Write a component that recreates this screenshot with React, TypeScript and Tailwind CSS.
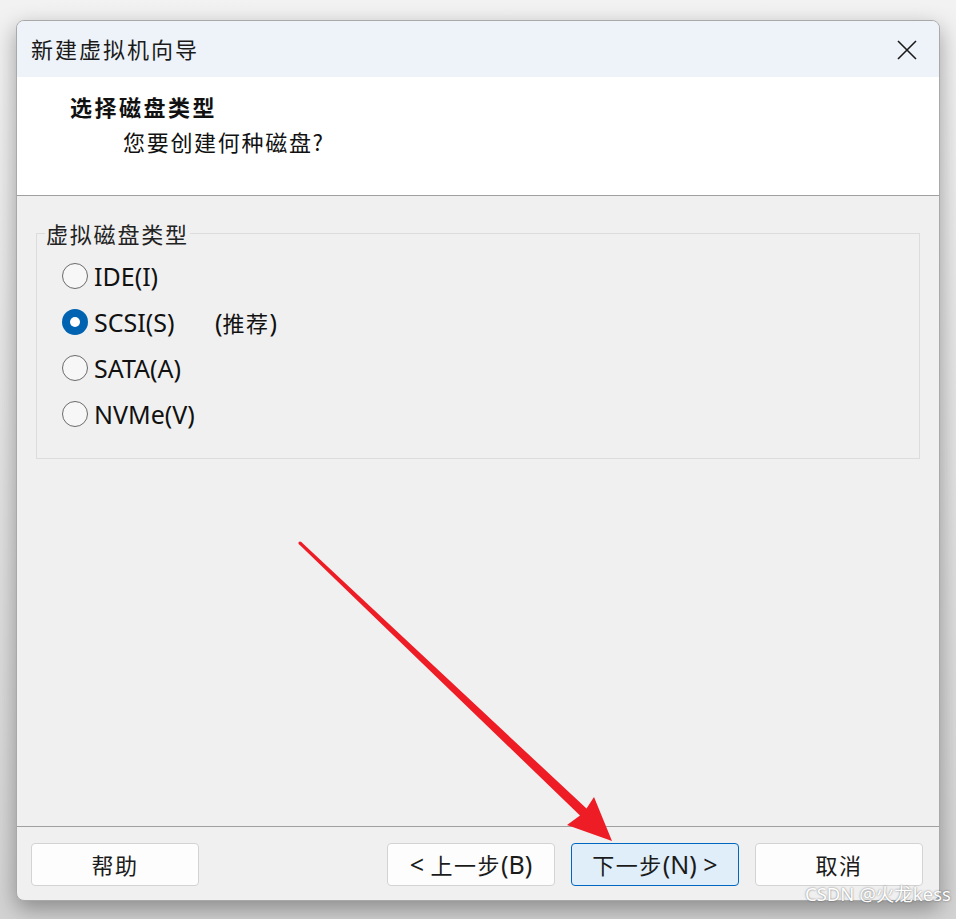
import React, { useState } from 'react';

const FONT = "font-['Noto_Sans','Noto_Sans_CJK_SC',sans-serif]";

const diskTypes = [
  { id: 'ide', label: 'IDE(I)' },
  { id: 'scsi', label: 'SCSI(S)', note: '(推荐)' },
  { id: 'sata', label: 'SATA(A)' },
  { id: 'nvme', label: 'NVMe(V)' },
];

// Windows draws latin runs in Segoe UI, which sits larger than the CJK face
const Mixed: React.FC<{ text: string }> = ({ text }) => (
  <>
    {text.split(/([\x20-\x7e]+)/).map((part, i) =>
      /^[\x20-\x7e]+$/.test(part) ? (
        <span key={i} className="text-[25px] whitespace-pre">
          {part}
        </span>
      ) : (
        <span key={i} className="text-[22px] tracking-[1.5px]">
          {part}
        </span>
      )
    )}
  </>
);

const Radio: React.FC<{ checked: boolean }> = ({ checked }) =>
  checked ? (
    <span className="w-[26px] h-[26px] rounded-full bg-[#0063b1] flex items-center justify-center shrink-0">
      <span className="w-[10px] h-[10px] rounded-full bg-white" />
    </span>
  ) : (
    <span className="w-[26px] h-[26px] rounded-full border-[1.5px] border-[#6b6b6b] bg-[#f7f7f7] shrink-0" />
  );

const WizButton: React.FC<{ label: string; primary?: boolean }> = ({ label, primary }) => (
  <button
    className={`w-[168px] h-[43px] rounded-[4px] border text-[#1b1b1b] flex items-center justify-center leading-none ${
      primary ? 'bg-[#e0eef9] border-[#0067c0]' : 'bg-[#fdfdfd] border-[#d3d3d3]'
    }`}
  >
    <Mixed text={label} />
  </button>
);

const App: React.FC = () => {
  const [selected, setSelected] = useState('scsi');

  return (
    <div className={`relative w-[956px] h-[919px] overflow-hidden bg-gradient-to-b from-[#f2f2f2] to-[#d3d3d3] pt-[20px] pl-[16px] ${FONT}`}>
      <div className="w-[924px] h-[881px] flex flex-col border border-[#a9a9a9] rounded-[8px] overflow-hidden shadow-[0_8px_22px_rgba(0,0,0,0.35)] bg-[#f0f0f0]">
        {/* title bar */}
        <div className="h-[56px] shrink-0 bg-[#eef3f9] flex items-center justify-between pl-[14px] pr-[22px]">
          <span className="text-[22px] tracking-[2px] text-[#1a1a1a] font-['Noto_Sans_CJK_SC',sans-serif] -mt-[2px]">新建虚拟机向导</span>
          <svg width="20" height="20" viewBox="0 0 20 20" className="mt-[1px]">
            <path d="M1 1 L19 19 M19 1 L1 19" stroke="#1a1a1a" strokeWidth="1.6" fill="none" />
          </svg>
        </div>

        {/* header */}
        <div className="h-[119px] shrink-0 bg-white border-b border-[#a0a0a0] pl-[53px] pt-[14px] font-['Noto_Sans_CJK_SC',sans-serif] text-[#111]">
          <div className="text-[22px] leading-[30px] font-bold tracking-[2.5px]">选择磁盘类型</div>
          <div className="text-[22px] leading-[30px] mt-[5px] pl-[53px] tracking-[1.7px]">您要创建何种磁盘?</div>
        </div>

        {/* body */}
        <div className="flex-1 px-[19px] pt-[26px]">
          <fieldset className="border border-[#dcdcdc]">
            <legend className="ml-[8px] px-[1px] text-[22px] leading-[22px] tracking-[1.8px] text-[#222] font-['Noto_Sans_CJK_SC',sans-serif]">
              虚拟磁盘类型
            </legend>
            <div className="pl-[25px] pt-[9px] pb-[21px]">
              {diskTypes.map((d) => (
                <label
                  key={d.id}
                  onClick={() => setSelected(d.id)}
                  className="h-[46px] flex items-center gap-[6px] cursor-default text-[#111]"
                >
                  <Radio checked={selected === d.id} />
                  <span className="w-[115px] leading-none">
                    <Mixed text={d.label} />
                  </span>
                  {d.note && (
                    <span className="leading-none">
                      <Mixed text={d.note} />
                    </span>
                  )}
                </label>
              ))}
            </div>
          </fieldset>
        </div>

        {/* footer */}
        <div className="h-[74px] shrink-0 border-t border-[#a0a0a0] flex items-start justify-between pt-[16px] pl-[14px] pr-[16px]">
          <WizButton label="帮助" />
          <div className="flex gap-[16px]">
            <WizButton label="< 上一步(B)" />
            <WizButton label="下一步(N) >" primary />
            <WizButton label="取消" />
          </div>
        </div>
      </div>

      {/* red annotation arrow */}
      <svg className="absolute inset-0 pointer-events-none" width="956" height="919" viewBox="0 0 956 919">
        <polygon
          points="301,541.8 586.5,808.5 594,797 612,841 567,825 580,815.5 299,544.2"
          fill="#ee1c25"
          strokeLinejoin="round"
        />
        <circle cx="300" cy="543" r="1.6" fill="#ee1c25" />
      </svg>

      {/* watermark */}
      <span className="absolute left-[805px] top-[880px] text-[18.5px] text-white font-['Noto_Sans','Noto_Sans_CJK_SC',sans-serif] [text-shadow:0_0_2px_rgba(0,0,0,0.55)]">
        CSDN @火龙kess
      </span>
    </div>
  );
};

export default App;
